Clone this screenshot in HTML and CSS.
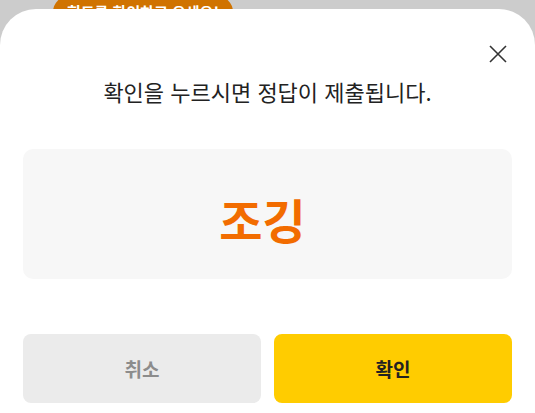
FILE: index.html
```html
<!DOCTYPE html>
<html lang="ko">
<head>
<meta charset="utf-8">
<link rel="stylesheet" href="styles.css">
</head>
<body>
<div class="badge">힌트를 확인하고 오세요!</div>
<div class="sheet">
  <div class="sheet-head">
    <button class="close" aria-label="닫기">
      <svg width="18" height="18" viewBox="0 0 18 18"><path d="M1 1L17 17M17 1L1 17" stroke="#333" stroke-width="1.6" fill="none"/></svg>
    </button>
  </div>
  <p class="message">확인을 누르시면 정답이 제출됩니다.</p>
  <div class="answer">조깅</div>
  <div class="actions">
    <button class="btn btn-cancel">취소</button>
    <button class="btn btn-ok">확인</button>
  </div>
</div>
</body>
</html>
```
FILE: styles.css
```css
html, body {
  margin: 0;
  height: 100%;
}
body {
  background: #cccccc;
  font-family: "Noto Sans CJK KR", "Noto Sans", sans-serif;
  position: relative;
  overflow: hidden;
}
.badge {
  position: absolute;
  left: 53px;
  top: -4px;
  width: 180px;
  height: 32px;
  line-height: 32px;
  border-radius: 16px;
  background: #d07300;
  color: #fff;
  font-size: 15px;
  font-weight: 700;
  text-align: center;
}
.sheet {
  position: relative;
  margin-top: 9px;
  height: calc(100% - 9px);
  background: #fff;
  border-radius: 36px 36px 0 0;
  padding: 0 23px;
  box-sizing: border-box;
}
.sheet-head {
  display: flex;
  justify-content: flex-end;
  padding-top: 36px;
  padding-right: 5px;
}
.close {
  border: 0;
  background: none;
  padding: 0;
  width: 18px;
  height: 18px;
  display: block;
}
.close svg { display: block; }
.message {
  margin: 13px 0 0;
  text-align: center;
  font-size: 22px;
  line-height: 30px;
  color: #222;
}
.answer {
  margin-top: 43px;
  height: 130px;
  box-sizing: border-box;
  padding: 8px 10px 0 0;
  border-radius: 10px;
  background: #f7f7f7;
  display: flex;
  align-items: center;
  justify-content: center;
  color: #f26c00;
  font-size: 47px;
  font-weight: 700;
}
.actions {
  margin-top: 55px;
  display: grid;
  grid-template-columns: 1fr 1fr;
  gap: 13px;
}
.btn {
  height: 69px;
  border: 0;
  border-radius: 8px;
  font-family: inherit;
  font-size: 19px;
  font-weight: 700;
}
.btn-cancel {
  background: #ebebeb;
  color: #8c8c8c;
}
.btn-ok {
  background: #ffcc00;
  color: #222;
}
```
